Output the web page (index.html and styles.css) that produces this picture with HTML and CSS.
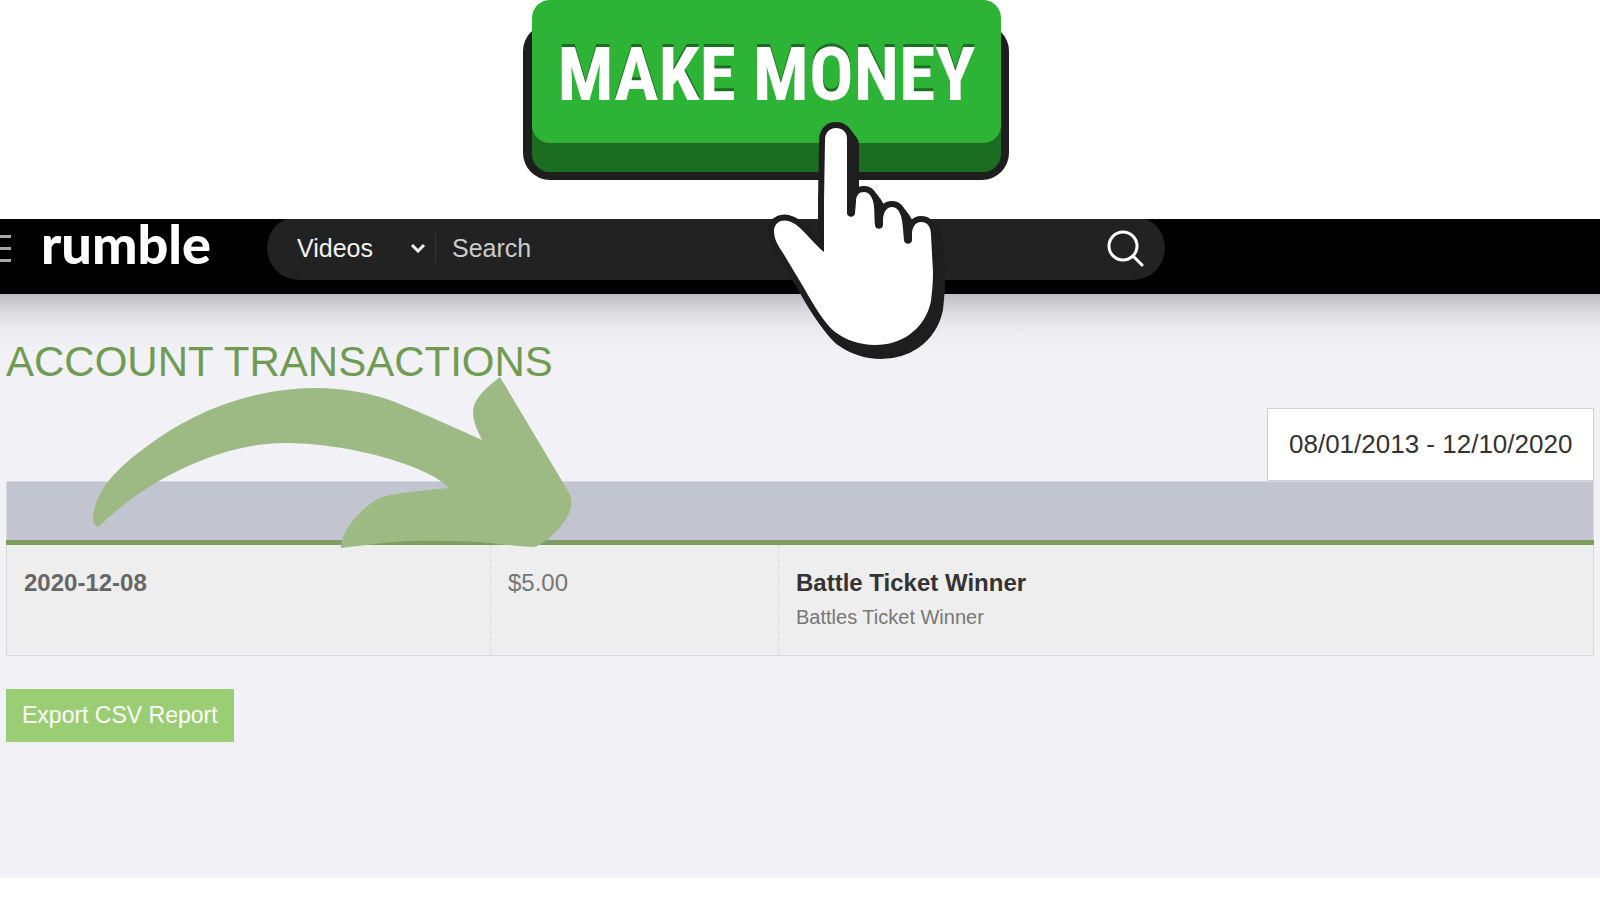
FILE: index.html
```html
<!DOCTYPE html>
<html lang="en">
<head>
    <meta charset="UTF-8">
    <meta name="viewport" content="width=device-width, initial-scale=1.0">
    <title>Account Transactions - Rumble</title>
    <link rel="stylesheet" href="styles.css">
</head>
<body>

<!-- Banner -->
<div class="banner">
    <button type="button" class="money-button"><span class="money-face">MAKE MONEY</span></button>
    <svg class="hand" viewBox="764 116 190 250" aria-hidden="true">
        <defs>
            <path id="hand-shape" d="M824 252 C813 243 803 229 795 224 C782 216 774 223 774 231 C774 240 779 247 783 253 L804 288 C814 306 825 324 835 332 C846 340 860 345 875 345 C889 345 900 341 909 335 C920 327 928 316 931 301 C932 292 933 284 933 272 L931 235 C931 226 927 222 921 222 C916 222 913 226 912 232 L912 240 C912 245 904 245 904 240 C903 231 903 223 901 216 C899 210 896 207 892 207 C887 207 884 211 883 218 L883 225 C883 230 875 230 875 225 C874 216 875 208 873 201 C871 195 868 192 864 192 C859 192 856 195 856 202 L855 213 C855 218 847 218 847 213 L847 138 C847 132 842 128 836 128 C829 128 825 133 825 140 L824 200 Z"/>
        </defs>
        <use href="#hand-shape" class="hand-shadow" x="6" y="8"/>
        <use href="#hand-shape" class="hand-shadow" x="3" y="4"/>
        <use href="#hand-shape" class="hand-shadow"/>
        <use href="#hand-shape" class="hand-fill"/>
    </svg>
</div>

<!-- Header -->
<header class="header">
    <button type="button" class="menu-button" aria-label="Menu">
        <span></span><span></span><span></span>
    </button>
    <a href="#" class="logo">rumble</a>
    <form class="search">
        <select class="search-type" aria-label="Search type">
            <option>Videos</option>
            <option>Channels</option>
        </select>
        <svg class="chevron" width="16" height="10" viewBox="0 0 16 10" aria-hidden="true">
            <path d="M2 2 L8 8 L14 2"/>
        </svg>
        <input type="text" class="search-input" placeholder="Search" aria-label="Search">
        <button type="submit" class="search-button" aria-label="Search">
            <svg width="38" height="38" viewBox="0 0 38 38">
                <circle cx="17" cy="17" r="14"/>
                <path d="M27 27 L36 36"/>
            </svg>
        </button>
    </form>
</header>

<!-- Transactions -->
<main class="content">
    <h1>ACCOUNT TRANSACTIONS</h1>
    <input type="text" class="date-range" value="08/01/2013 - 12/10/2020" aria-label="Date range">

    <table class="transactions">
        <thead>
            <tr>
                <th class="col-date"></th>
                <th class="col-amount"></th>
                <th></th>
            </tr>
        </thead>
        <tbody>
            <tr>
                <td class="date">2020-12-08</td>
                <td>$5.00</td>
                <td>
                    <strong>Battle Ticket Winner</strong>
                    <small>Battles Ticket Winner</small>
                </td>
            </tr>
        </tbody>
    </table>

    <button type="button" class="export-button">Export CSV Report</button>

    <svg class="arrow" viewBox="90 374 486 178" aria-hidden="true">
        <path d="M98 527 C94 525 93 522 93 517 C94 503 103 487 110 479 C123 464 141 450 160 437 C204 407 260 388 315 388 C343 388 371 393 395 402 C425 414 453 427 482 440 C476 428 473 420 473 411 C474 398 485 389 500 377 L568 491 C573 500 573 507 566 519 C558 531 548 540 539 545 C536 547 533 547 530 547 C502 545 485 541 444 541 C395 540 378 544 341 548 C341 530 362 507 378 499 C389 493 420 491 449 488 C441 480 432 475 413 467 C372 451 322 443 285 443 C240 443 195 460 157 482 C135 495 116 510 98 527 Z"/>
    </svg>
</main>

</body>
</html>
```
FILE: styles.css
```css
* {
    box-sizing: border-box;
}
body {
    margin: 0;
    font-family: "Liberation Sans", Arial, sans-serif;
    background-color: #ffffff;
}
button, input, select {
    font-family: inherit;
    border: none;
    border-radius: 0;
    margin: 0;
    padding: 0;
    background: none;
}
button {
    cursor: pointer;
}

/* Banner */
.banner {
    position: relative;
    z-index: 2;
    height: 219px;
    padding-left: 523px;
    background-color: #ffffff;
}
.money-button {
    display: block;
    position: relative;
    width: 486px;
    height: 180px;
    padding: 0 8px 0 9px;
}
.money-button::before {
    content: "";
    position: absolute;
    top: 24px;
    right: 0;
    bottom: 0;
    left: 0;
    background-color: #1e1e1e;
    border-radius: 27px;
}
.money-face {
    display: flex;
    position: relative;
    align-items: center;
    justify-content: center;
    height: 143px;
    margin-bottom: 37px;
    padding-top: 6px;
    background-color: #2db436;
    border-radius: 18px;
    box-shadow: 0 29px 0 #1b6e21;
    color: #ffffff;
    font-family: "Roboto Condensed", "Open Sans Condensed", "Liberation Sans Narrow", Roboto, sans-serif;
    font-size: 74px;
    font-weight: bold;
    white-space: nowrap;
    text-shadow: 0 -3px 0 #1b6e21;
}
.hand {
    position: absolute;
    top: 116px;
    left: 764px;
    width: 190px;
    height: 250px;
    pointer-events: none;
}
.hand-shadow {
    fill: #1e1e1e;
    stroke: #1e1e1e;
    stroke-width: 12;
    stroke-linejoin: round;
}
.hand-fill {
    fill: #ffffff;
}

/* Header */
.header {
    display: flex;
    align-items: flex-end;
    height: 75px;
    padding-bottom: 14px;
    background-color: #000000;
}
.menu-button {
    display: flex;
    flex-direction: column;
    gap: 9px;
    width: 11px;
    height: 45px;
}
.menu-button span {
    height: 3px;
    background-color: #a8a8a8;
}
.logo {
    width: 226px;
    margin-bottom: 4px;
    margin-left: 30px;
    color: #ffffff;
    font-family: Lato, sans-serif;
    font-size: 54px;
    font-weight: 900;
    line-height: 64px;
    text-decoration: none;
}
.search {
    display: flex;
    align-items: center;
    flex: 0 0 898px;
    height: 64px;
    padding: 0 21px 0 30px;
    background-color: #222222;
    border-radius: 32px;
}
.search-type {
    width: 113px;
    appearance: none;
    color: #f2f2f2;
    font-size: 25px;
}
.chevron {
    fill: none;
    stroke: #f2f2f2;
    stroke-width: 3;
}
.search-input {
    flex: 1;
    height: 30px;
    margin-left: 9px;
    padding-left: 16px;
    border-left: 1px solid #363636;
    color: #ffffff;
    font-size: 25px;
}
.search-input::placeholder {
    color: #cccccc;
    opacity: 1;
}
.search-button {
    display: flex;
}
.search-button svg {
    fill: none;
    stroke: #ffffff;
    stroke-width: 3;
    stroke-linecap: round;
}

/* Transactions */
.content {
    position: relative;
    display: flex;
    flex-direction: column;
    min-height: 584px;
    padding: 44px 6px 0;
    background: linear-gradient(#bebdc1, #dfdee3 20px, #eeedf2 40px, #f2f1f6 60px);
}
h1 {
    margin: 0;
    color: #6f9b52;
    font-size: 42px;
    font-weight: normal;
    line-height: 48px;
}
.date-range {
    align-self: flex-end;
    width: 327px;
    height: 73px;
    margin-top: 22px;
    padding-left: 21px;
    background-color: #ffffff;
    border: 1px solid #d0d0d8;
    color: #333333;
    font-size: 26px;
}
.transactions {
    width: 100%;
    border-collapse: collapse;
    table-layout: fixed;
    border: 1px solid #d8d8e0;
    background-color: #eeeeee;
}
.transactions th {
    height: 61px;
    background-color: #c2c5cf;
    border-bottom: 5px solid #7e9f61;
}
.col-date {
    width: 484px;
}
.col-amount {
    width: 288px;
}
.transactions td {
    height: 111px;
    padding: 24px 17px;
    vertical-align: top;
    border-left: 1px dashed #dadada;
    color: #777777;
    font-size: 24px;
    line-height: 28px;
}
.transactions .date {
    color: #666666;
    font-weight: bold;
}
.transactions strong {
    display: block;
    color: #333333;
}
.transactions small {
    display: block;
    margin-top: 6px;
    font-size: 20px;
}
.export-button {
    align-self: flex-start;
    height: 53px;
    margin-top: 33px;
    padding: 0 16px;
    background-color: #9bcd74;
    color: #ffffff;
    font-size: 23px;
}
.arrow {
    position: absolute;
    top: 80px;
    left: 90px;
    width: 486px;
    height: 178px;
    fill: #9dba84;
    pointer-events: none;
}
```
